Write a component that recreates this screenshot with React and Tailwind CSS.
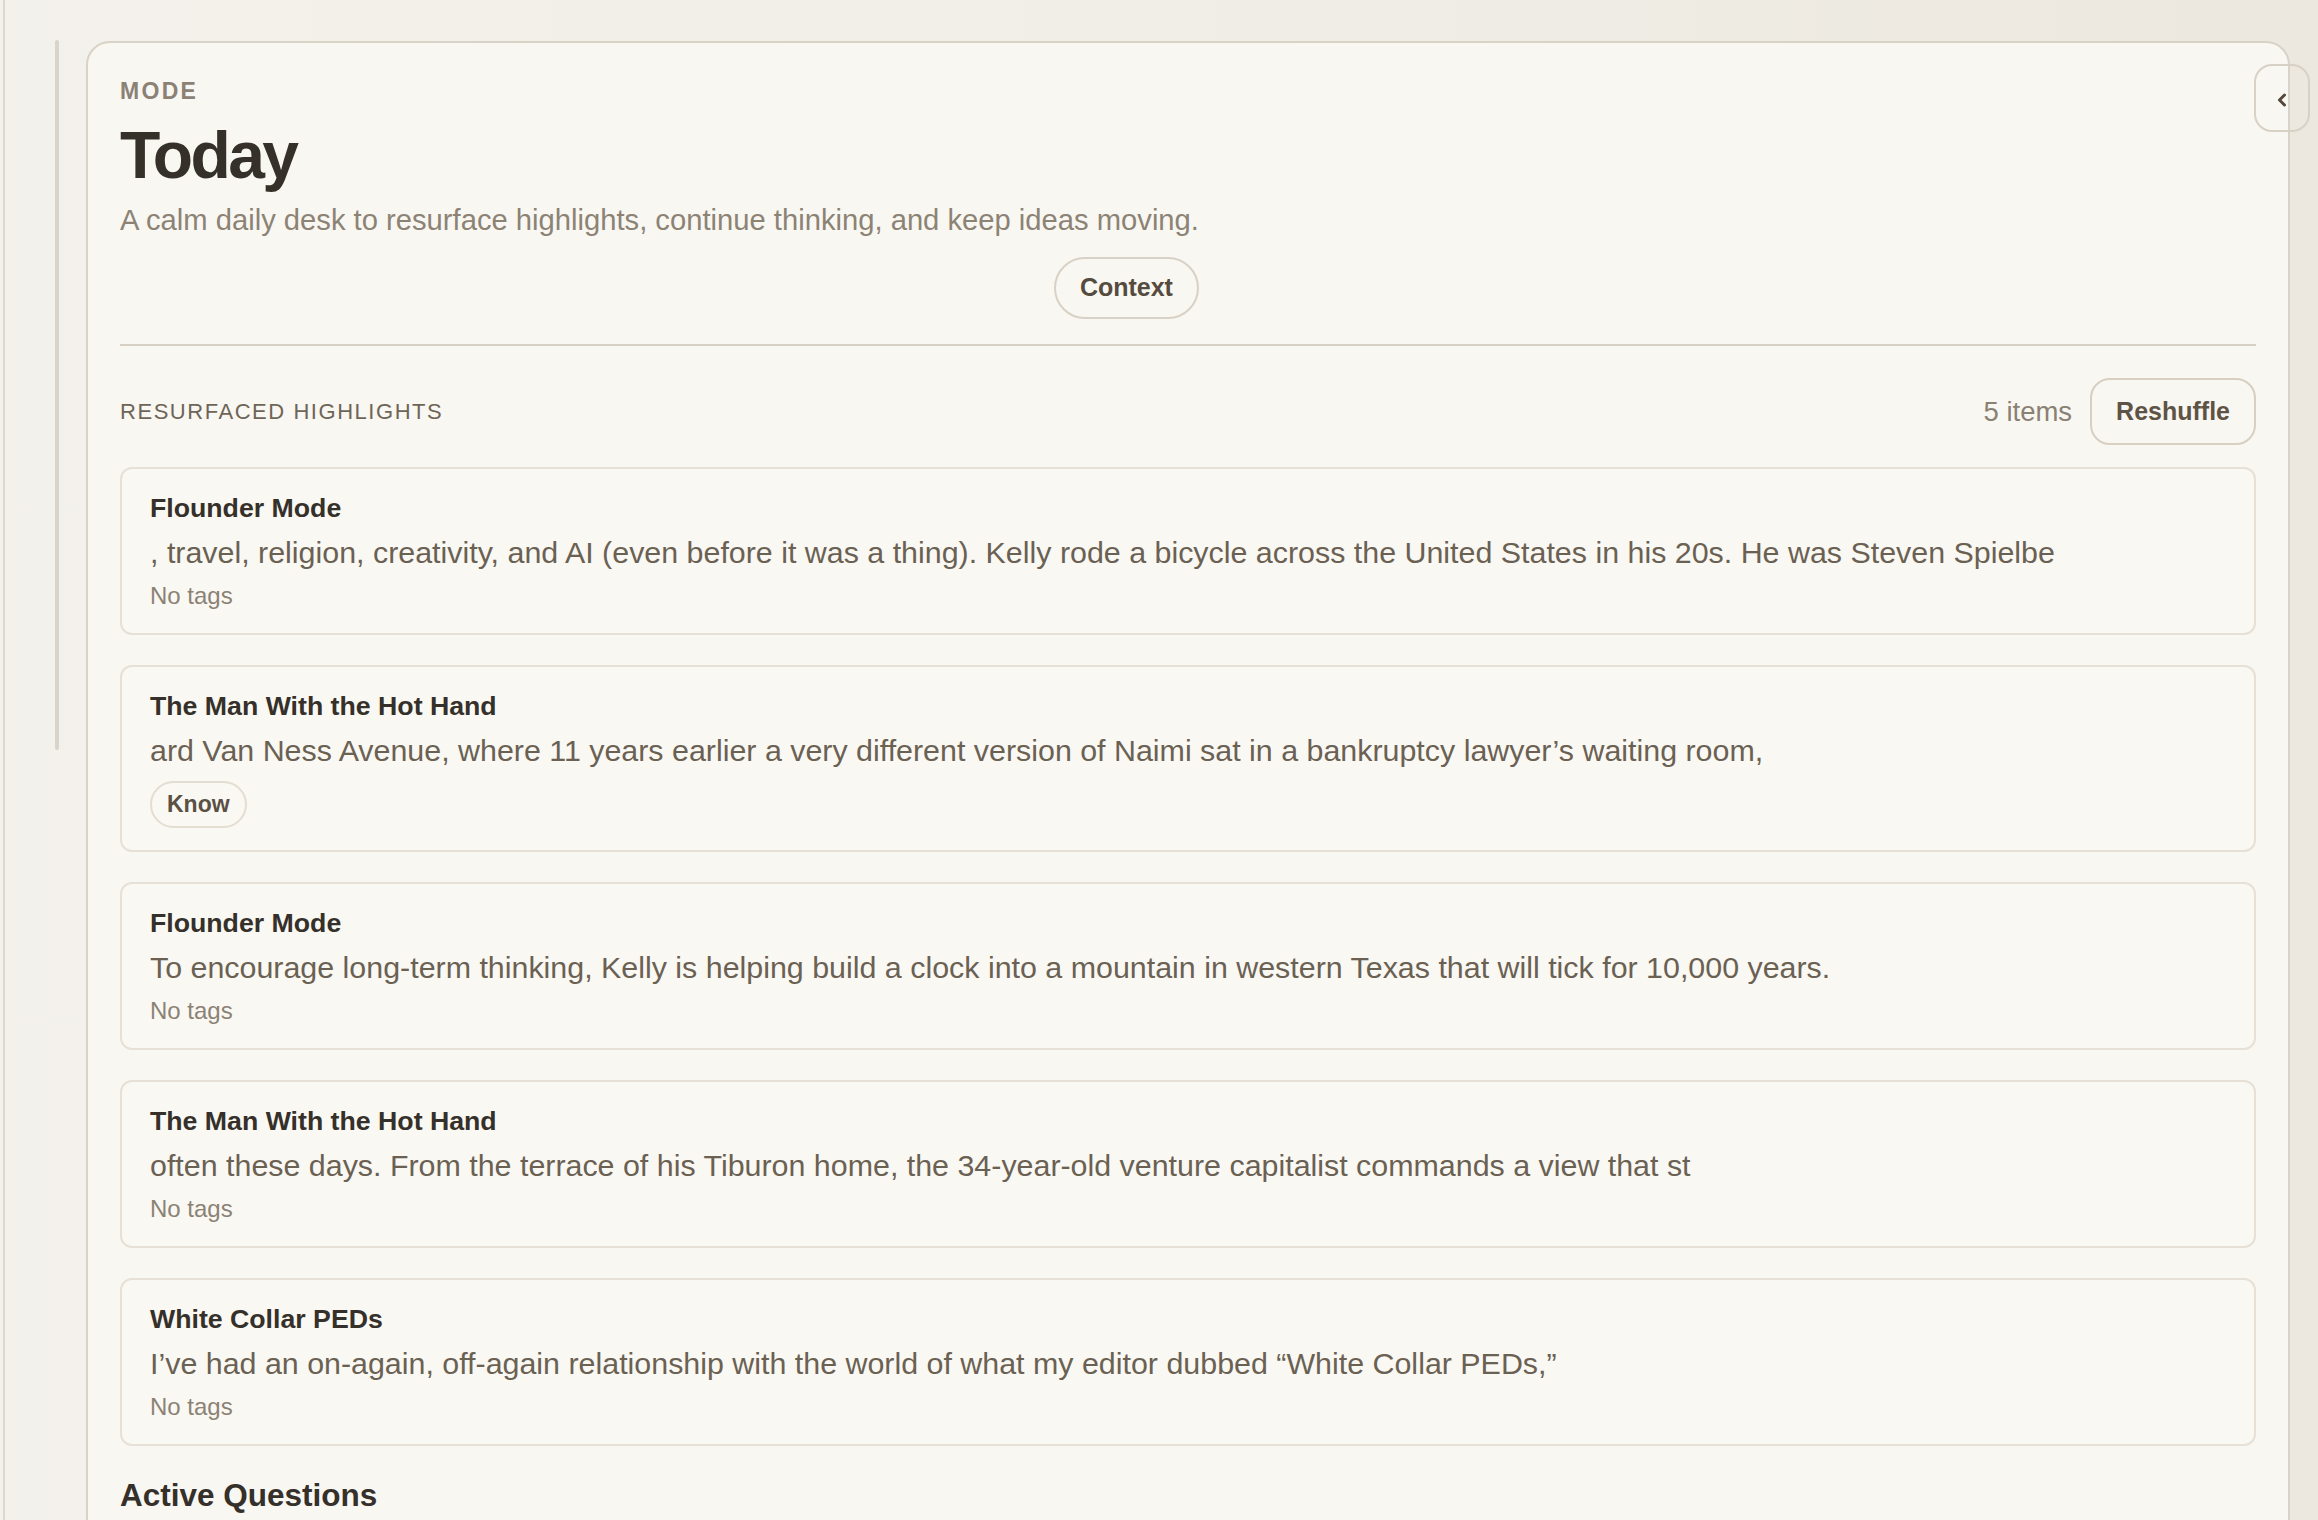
import React from "react";

const highlights = [
  {
    title: "Flounder Mode",
    body: ", travel, religion, creativity, and AI (even before it was a thing). Kelly rode a bicycle across the United States in his 20s. He was Steven Spielbe",
    tags: [],
  },
  {
    title: "The Man With the Hot Hand",
    body: "ard Van Ness Avenue, where 11 years earlier a very different version of Naimi sat in a bankruptcy lawyer’s waiting room,",
    tags: ["Know"],
  },
  {
    title: "Flounder Mode",
    body: "To encourage long-term thinking, Kelly is helping build a clock into a mountain in western Texas that will tick for 10,000 years.",
    tags: [],
  },
  {
    title: "The Man With the Hot Hand",
    body: "often these days. From the terrace of his Tiburon home, the 34-year-old venture capitalist commands a view that st",
    tags: [],
  },
  {
    title: "White Collar PEDs",
    body: "I’ve had an on-again, off-again relationship with the world of what my editor dubbed “White Collar PEDs,”",
    tags: [],
  },
];

function HighlightCard({ item }) {
  return (
    <div className="rounded-[12px] border-2 border-[#e6e0d6] bg-[#faf8f3] px-[28px] py-[22px]">
      <div className="text-[26.7px] leading-[34px] font-bold text-[#35302a]">{item.title}</div>
      <div className="mt-[7px] text-[30.4px] leading-[40px] text-[#6a6153] whitespace-nowrap overflow-hidden">{item.body}</div>
      {item.tags.length === 0 ? (
        <div className="mt-[9px] text-[24px] leading-[30px] text-[#8b8275]">No tags</div>
      ) : (
        <div className="mt-[11px] flex gap-2">
          {item.tags.map((t) => (
            <span
              key={t}
              className="h-[47px] px-[15px] flex items-center rounded-full border-2 border-[#e3ddd2] text-[23px] font-bold text-[#5a5044]"
            >
              {t}
            </span>
          ))}
        </div>
      )}
    </div>
  );
}

export default function App() {
  return (
    <div
      className="w-[2318px] h-[1520px] overflow-hidden flex bg-gradient-to-r from-[#f3f1eb] via-[#f1eee7] to-[#ece8df]"
      style={{ fontFamily: '"Liberation Sans", Arial, Helvetica, sans-serif' }}
    >
      <div className="ml-[3px] w-[2px] self-stretch bg-[#ddd8ce]" />
      <div className="ml-[50px] mt-[40px] w-[4px] h-[710px] rounded-full bg-[#d9d4ca]" />
      <div className="relative ml-[27px] mt-[41px] w-[2204px] h-[1700px] shrink-0 rounded-[24px] border-2 border-[#d9d2c6] bg-[#f9f7f2] px-[32px] pt-[34px]">
        <button className="absolute right-[-22px] top-[21px] w-[56px] h-[68px] rounded-[18px] border-2 border-[#d8d1c5] bg-transparent flex items-center justify-center">
          <svg width="12" height="14" viewBox="0 0 12 14" className="mt-[4px]">
            <polyline points="8.5,2 3.5,7 8.5,12" fill="none" stroke="#55493c" strokeWidth="3" strokeLinecap="round" strokeLinejoin="round" />
          </svg>
        </button>

        <div className="w-fit flex flex-col">
          <div className="text-[23px] leading-[28px] font-bold tracking-[0.1em] text-[#8b8174]">MODE</div>
          <h1 className="mt-[14px] text-[66px] leading-[72px] font-bold tracking-[-0.04em] text-[#36302a]">Today</h1>
          <p className="mt-[11px] text-[29.2px] leading-[36px] text-[#8c8375]">
            A calm daily desk to resurface highlights, continue thinking, and keep ideas moving.
          </p>
          <button className="self-end mt-[19px] h-[62px] px-[24px] rounded-full border-2 border-[#d8d1c5] text-[25px] font-bold text-[#554b3e]">
            Context
          </button>
        </div>

        <div className="mt-[25px] h-[2px] bg-[#d6cfc3]" />

        <div className="mt-[32px] flex items-center justify-between">
          <div className="text-[22px] tracking-[0.07em] text-[#6e6557]">RESURFACED HIGHLIGHTS</div>
          <div className="flex items-center gap-[18px]">
            <span className="text-[27.5px] text-[#8a8175]">5 items</span>
            <button className="h-[67px] px-[24px] rounded-[20px] border-2 border-[#d7cfc2] text-[25px] font-bold text-[#5e5446]">
              Reshuffle
            </button>
          </div>
        </div>

        <div className="mt-[22px] flex flex-col gap-[30px]">
          {highlights.map((h, i) => (
            <HighlightCard key={i} item={h} />
          ))}
        </div>

        <h2 className="mt-[29px] text-[31.5px] leading-[40px] font-bold text-[#36302a]">Active Questions</h2>
      </div>
    </div>
  );
}
